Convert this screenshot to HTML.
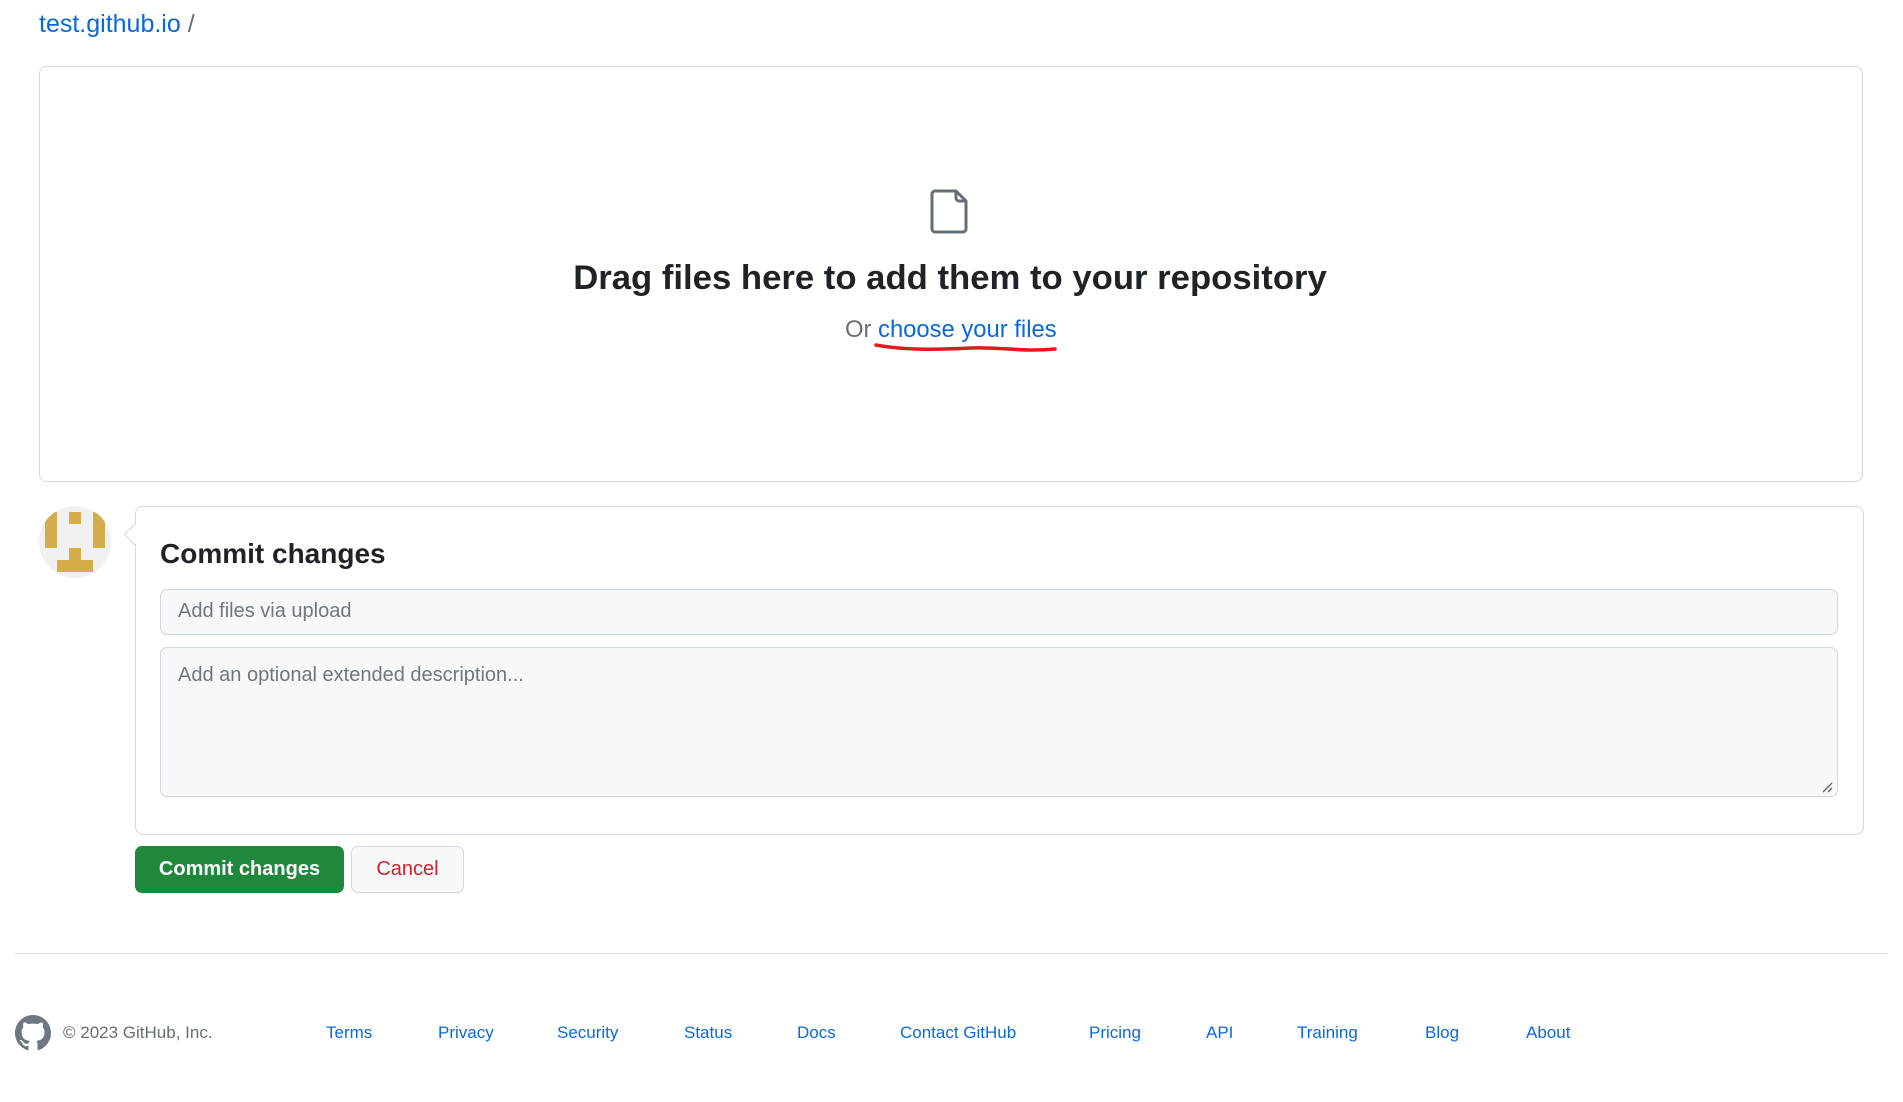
<!DOCTYPE html>
<html><head><meta charset="utf-8"><style>
body{margin:0;width:1903px;height:1102px;background:#fff;font-family:"Liberation Sans",sans-serif;position:relative;overflow:hidden;color:#1f2328}
.a{position:absolute;white-space:nowrap}
a{color:#0969da;text-decoration:none}
.ft a{position:absolute;top:1023px;font-size:17px;color:#0969da}
</style></head><body>
<div class="a" style="left:39px;top:10px;font-size:25px"><a>test.github.io</a> <span style="color:#656d76">/</span></div>
<div class="a" style="left:39px;top:66px;width:1822px;height:414px;border:1px solid #d0d7de;border-radius:8px"></div>
<svg class="a" style="left:930px;top:188px" width="40" height="46" viewBox="0 0 40 46"><path d="M5 3h21l10 10v28a3 3 0 0 1-3 3H5a3 3 0 0 1-3-3V6a3 3 0 0 1 3-3z M26 3v7a3 3 0 0 0 3 3h7" fill="none" stroke="#656d76" stroke-width="3" stroke-linejoin="round"/></svg>
<div class="a" style="left:0;width:1900px;text-align:center;top:259px;font-size:34.7px;font-weight:bold">Drag files here to add them to your repository</div>
<div class="a" style="left:845px;top:316px;font-size:23.8px;color:#656d76">Or <a>choose your files</a></div>
<svg class="a" style="left:872px;top:340px" width="190" height="20"><path d="M4 5 C30 10,60 10,100 8 C130 7,150 12,183 9" fill="none" stroke="#e0191f" stroke-width="3.5" stroke-linecap="round"/></svg>
<svg class="a" style="left:39px;top:506px" width="72" height="72"><defs><clipPath id="c"><circle cx="36" cy="36" r="36"/></clipPath></defs><circle cx="36" cy="36" r="36" fill="#f0f0f0"/><g clip-path="url(#c)" fill="#d4ac4a"><rect x="6" y="6" width="12" height="36"/><rect x="30" y="6" width="12" height="12"/><rect x="54" y="6" width="12" height="36"/><rect x="30" y="42" width="12" height="12"/><rect x="18" y="54" width="36" height="12"/></g></svg>
<div class="a" style="left:135px;top:506px;width:1727px;height:327px;border:1px solid #d0d7de;border-radius:8px"></div>
<div class="a" style="left:127px;top:527px;width:14px;height:14px;background:#fff;border-left:1px solid #d0d7de;border-bottom:1px solid #d0d7de;transform:rotate(45deg)"></div>
<div class="a" style="left:160px;top:538px;font-size:28px;font-weight:bold">Commit changes</div>
<div class="a" style="left:160px;top:589px;width:1676px;height:44px;border:1px solid #d0d7de;border-radius:7px;background:#f6f8fa"></div>
<div class="a" style="left:178px;top:600px;font-size:20px;color:#6e7781">Add files via upload</div>
<div class="a" style="left:160px;top:647px;width:1676px;height:148px;border:1px solid #d0d7de;border-radius:7px;background:#f6f8fa"></div>
<div class="a" style="left:178px;top:664px;font-size:20px;color:#6e7781">Add an optional extended description...</div>
<svg class="a" style="left:1821px;top:781px" width="12" height="12"><path d="M2 11L11 2M7 11L11 7" stroke="#57606a" stroke-width="1.3"/></svg>
<div class="a" style="left:135px;top:846px;width:209px;height:47px;background:#1f883d;border-radius:7px;color:#fff;font-size:20px;font-weight:bold;text-align:center;line-height:47px">Commit changes</div>
<div class="a" style="left:351px;top:846px;width:111px;height:45px;background:#f6f8fa;border:1px solid #d0d7de;border-radius:7px;color:#cf222e;font-size:20px;text-align:center;line-height:45px">Cancel</div>
<div class="a" style="left:15px;top:953px;width:1873px;height:1px;background:#d8dee4"></div>
<svg class="a" style="left:15px;top:1015px" width="36" height="36" viewBox="0 0 16 16"><path fill="#6e7781" d="M8 0C3.580 0 0 3.58 0 8c0 3.54 2.29 6.53 5.47 7.59.4.07.55-.17.55-.38 0-.19-.01-.82-.01-1.49-2.010.37-2.53-.49-2.69-.94-.09-.23-.48-.94-.82-1.13-.28-.15-.68-.52-.01-.53.63-.01 1.08.58 1.23.82.72 1.21 1.87.87 2.33.66.07-.52.28-.87.51-1.07-1.78-.2-3.64-.89-3.64-3.95 0-.87.31-1.59.82-2.15-.08-.2-.36-1.02.08-2.12 0 0 .67-.21 2.2.82.64-.18 1.32-.27 2-.27.68 0 1.36.09 2 .27 1.53-1.04 2.2-.82 2.2-.82.44 1.1.16 1.92.08 2.12.51.56.82 1.27.82 2.15 0 3.07-1.87 3.75-3.65 3.95.29.25.54.73.54 1.48 0 1.07-.01 1.93-.01 2.2 0 .21.15.46.55.38A8.013 8.013 0 0016 8c0-4.42-3.58-8-8-8z"/></svg>
<div class="a" style="left:63px;top:1023px;font-size:17px;color:#656d76">© 2023 GitHub, Inc.</div>
<div class="ft">
<a style="left:326px">Terms</a><a style="left:438px">Privacy</a><a style="left:557px">Security</a><a style="left:684px">Status</a><a style="left:797px">Docs</a><a style="left:900px">Contact GitHub</a><a style="left:1089px">Pricing</a><a style="left:1206px">API</a><a style="left:1297px">Training</a><a style="left:1425px">Blog</a><a style="left:1526px">About</a>
</div>
</body></html>
